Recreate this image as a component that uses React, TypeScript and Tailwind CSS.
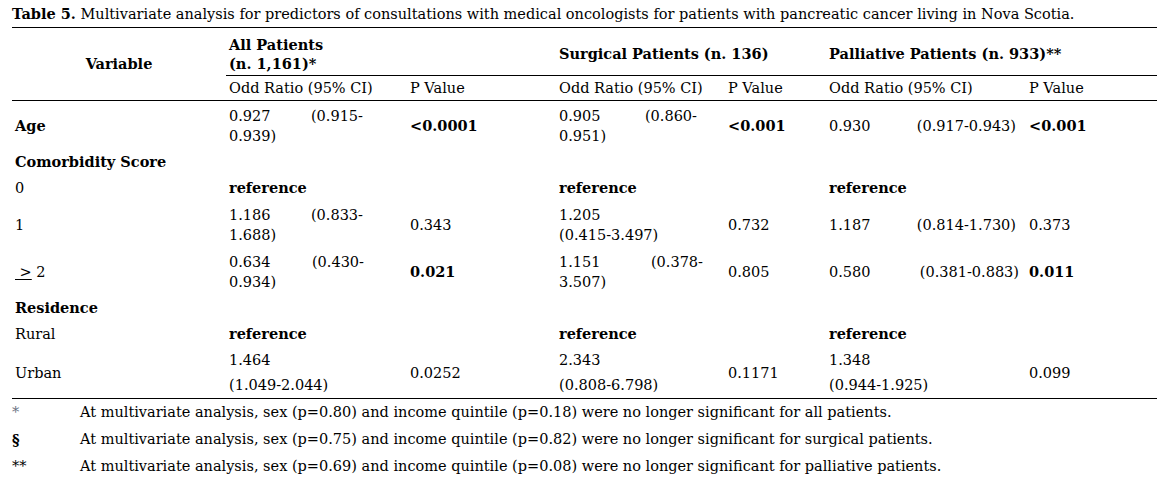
import type { ReactNode } from 'react';

type SplitProps = { a: string; b: string; rest?: string; w: string };

// odds ratio that Word justified over two lines: "0.927      (0.915-" / "0.939)"
function Split({ a, b, rest, w }: SplitProps) {
  return (
    <div className={w}>
      <div className="flex justify-between">
        <span>{a}</span>
        <span>{b}</span>
      </div>
      {rest && <div>{rest}</div>}
    </div>
  );
}

function Td({ children, className = '', colSpan, rowSpan }: { children?: ReactNode; className?: string; colSpan?: number; rowSpan?: number }) {
  return (
    <td colSpan={colSpan} rowSpan={rowSpan} className={`px-[3px] py-0 align-middle ${className}`}>
      {children}
    </td>
  );
}

const footnotes = [
  { mark: '*', cls: 'text-gray-500', text: 'At multivariate analysis, sex (p=0.80) and income quintile (p=0.18) were no longer significant for all patients.' },
  { mark: '§', cls: 'font-bold', text: 'At multivariate analysis, sex (p=0.75) and income quintile (p=0.82) were no longer significant for surgical patients.' },
  { mark: '**', cls: '', text: 'At multivariate analysis, sex (p=0.69) and income quintile (p=0.08) were no longer significant for palliative patients.' },
];

export default function App() {
  return (
    <div className="min-h-[485px] bg-white px-[12px] text-[14.5px] text-black" style={{ fontFamily: '"DejaVu Serif", serif' }}>
      <div className="w-[1145px]">
        <p className="h-[27px] leading-[27px] whitespace-nowrap">
          <span className="font-bold">Table 5.</span> Multivariate analysis for predictors of consultations with medical oncologists for
          patients with pancreatic cancer living in Nova Scotia.
        </p>

        <table className="w-[1145px] table-fixed border-collapse border-t border-b border-black leading-[20px]">
          <colgroup>
            <col className="w-[214px]" />
            <col className="w-[181px]" />
            <col className="w-[149px]" />
            <col className="w-[169px]" />
            <col className="w-[101px]" />
            <col className="w-[200px]" />
            <col className="w-[131px]" />
          </colgroup>
          <thead>
            <tr className="h-[48px]">
              <Td rowSpan={2} className="border-b border-black text-center font-bold">
                Variable
              </Td>
              <Td colSpan={2} className="border-b border-black pt-[4px] font-bold">
                <div className="leading-[19px]">All Patients</div>
                <div className="leading-[19px]">(n. 1,161)*</div>
              </Td>
              <Td colSpan={2} className="border-b border-black pt-[4px] font-bold">
                Surgical Patients (n. 136)
              </Td>
              <Td colSpan={2} className="border-b border-black pt-[4px] font-bold">
                Palliative Patients (n. 933)**
              </Td>
            </tr>
            <tr className="h-[25px] border-b border-black">
              <Td>Odd Ratio (95% CI)</Td>
              <Td>P Value</Td>
              <Td>Odd Ratio (95% CI)</Td>
              <Td>P Value</Td>
              <Td>Odd Ratio (95% CI)</Td>
              <Td>P Value</Td>
            </tr>
          </thead>
          <tbody>
            <tr className="h-[50px]">
              <Td className="font-bold">Age</Td>
              <Td><Split a="0.927" b="(0.915-" rest="0.939)" w="w-[134px]" /></Td>
              <Td className="font-bold">&lt;0.0001</Td>
              <Td><Split a="0.905" b="(0.860-" rest="0.951)" w="w-[138px]" /></Td>
              <Td className="font-bold">&lt;0.001</Td>
              <Td><Split a="0.930" b="(0.917-0.943)" w="w-[187px]" /></Td>
              <Td className="font-bold">&lt;0.001</Td>
            </tr>
            <tr className="h-[23px]">
              <Td className="font-bold">Comorbidity Score</Td>
              <Td /><Td /><Td /><Td /><Td /><Td />
            </tr>
            <tr className="h-[28px]">
              <Td>0</Td>
              <Td className="font-bold">reference</Td>
              <Td />
              <Td className="font-bold">reference</Td>
              <Td />
              <Td className="font-bold">reference</Td>
              <Td />
            </tr>
            <tr className="h-[47px]">
              <Td>1</Td>
              <Td><Split a="1.186" b="(0.833-" rest="1.688)" w="w-[134px]" /></Td>
              <Td>0.343</Td>
              <Td>
                <div>1.205</div>
                <div>(0.415-3.497)</div>
              </Td>
              <Td>0.732</Td>
              <Td><Split a="1.187" b="(0.814-1.730)" w="w-[187px]" /></Td>
              <Td>0.373</Td>
            </tr>
            <tr className="h-[47px]">
              <Td>
                <span className="underline underline-offset-2">{'\u00a0>'}</span> 2
              </Td>
              <Td><Split a="0.634" b="(0.430-" rest="0.934)" w="w-[135px]" /></Td>
              <Td className="font-bold">0.021</Td>
              <Td><Split a="1.151" b="(0.378-" rest="3.507)" w="w-[144px]" /></Td>
              <Td>0.805</Td>
              <Td><Split a="0.580" b="(0.381-0.883)" w="w-[190px]" /></Td>
              <Td className="font-bold">0.011</Td>
            </tr>
            <tr className="h-[25px]">
              <Td className="font-bold">Residence</Td>
              <Td /><Td /><Td /><Td /><Td /><Td />
            </tr>
            <tr className="h-[27px]">
              <Td>Rural</Td>
              <Td className="font-bold">reference</Td>
              <Td />
              <Td className="font-bold">reference</Td>
              <Td />
              <Td className="font-bold">reference</Td>
              <Td />
            </tr>
            <tr className="h-[50px]">
              <Td>Urban</Td>
              <Td>
                <div className="leading-[25px]">1.464</div>
                <div className="leading-[25px]">(1.049-2.044)</div>
              </Td>
              <Td>0.0252</Td>
              <Td>
                <div className="leading-[25px]">2.343</div>
                <div className="leading-[25px]">(0.808-6.798)</div>
              </Td>
              <Td>0.1171</Td>
              <Td>
                <div className="leading-[25px]">1.348</div>
                <div className="leading-[25px]">(0.944-1.925)</div>
              </Td>
              <Td>0.099</Td>
            </tr>
          </tbody>
        </table>

        <div className="pt-[1px]">
          {footnotes.map((f) => (
            <div key={f.mark} className="flex h-[27px] items-center whitespace-nowrap">
              <span className={`w-[68px] ${f.cls}`}>{f.mark}</span>
              <span>{f.text}</span>
            </div>
          ))}
        </div>
      </div>
    </div>
  );
}
